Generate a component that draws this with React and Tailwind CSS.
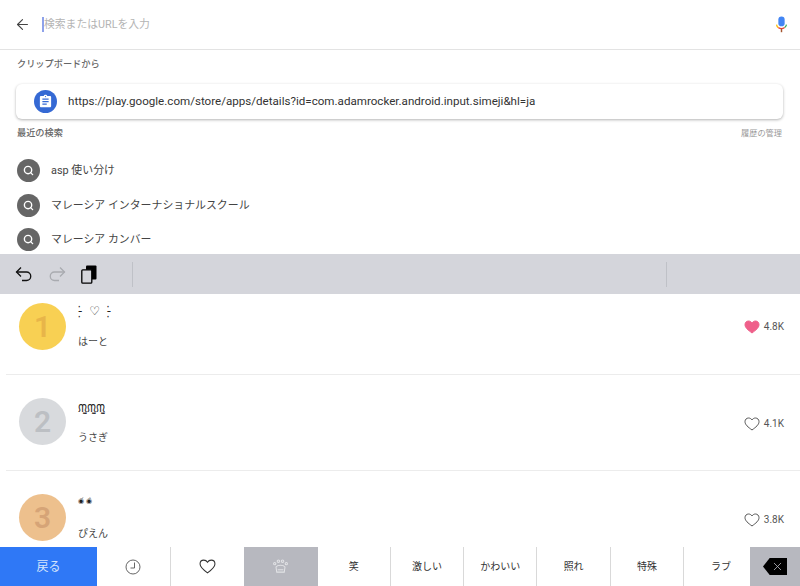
import React from "react";
import { ArrowLeft, Search, X } from "lucide-react";

const sans = "font-['Roboto','Noto_Sans_CJK_JP',sans-serif]";

const history = ["asp 使い分け", "マレーシア インターナショナルスクール", "マレーシア カンバー"];

const ranks = [
  { n: 1, face: "-̣̇ ♡ -̣̇", faceCls: "-mt-[1px] text-[12px] [word-spacing:3px]", nameCls: "mt-[15px]", likeCls: "mt-0", name: "はーと", likes: "4.8K", liked: true, h: "h-[81px]", top: "pt-[9px]", circle: "bg-[#f8d053]", digit: "text-[#e8b549]" },
  { n: 2, face: "ᙏ̤̫ᙏ̤̫ᙏ̤̫", faceCls: "mt-[2px] text-[11px]", nameCls: "mt-[13px]", likeCls: "mt-[2px]", name: "うさぎ", likes: "4.1K", h: "h-24", top: "pt-[23px]", circle: "bg-[#d8dadd]", digit: "text-[#bcbfc3]" },
  { n: 3, face: "◉́◉̀", faceCls: "-mt-[2px] text-[7px] tracking-[2px]", nameCls: "mt-[17px]", likeCls: "mt-[2px]", name: "ぴえん", likes: "3.8K", h: "h-[76px]", top: "pt-[23px]", circle: "bg-[#edc08d]", digit: "text-[#d6a477]" },
];

const tabs = ["笑", "激しい", "かわいい", "照れ", "特殊", "ラブ"];

function Clipboard() {
  return (
    <svg viewBox="0 0 24 24" className="w-[15px] h-[15px]" fill="#fff">
      <path d="M19 3h-4.18C14.4 1.84 13.3 1 12 1c-1.3 0-2.4.84-2.82 2H5c-1.1 0-2 .9-2 2v14c0 1.1.9 2 2 2h14c1.1 0 2-.9 2-2V5c0-1.1-.9-2-2-2zm-7 0c.55 0 1 .45 1 1s-.45 1-1 1-1-.45-1-1 .45-1 1-1zm2 14H7v-2h7v2zm3-4H7v-2h10v2zm0-4H7V7h10v2z" />
    </svg>
  );
}

function Mic() {
  return (
    <svg viewBox="0 0 14 20" className="w-[13px] h-[18px] mt-px" fill="none">
      <rect x="3.5" y="0.5" width="7" height="11" rx="3.5" fill="#4285f4" />
      <path d="M1.5 9.5c.2 1.6 1 2.8 2 3.4" stroke="#fbbc05" strokeWidth="1.4" />
      <path d="M3.5 12.9c2 1.2 5 1.2 7-.2" stroke="#ea4335" strokeWidth="1.4" />
      <path d="M10.5 12.7c1-.7 1.8-1.8 2-3.2" stroke="#34a853" strokeWidth="1.4" />
      <rect x="6.2" y="14" width="1.6" height="4" fill="#a5552f" />
    </svg>
  );
}

function Undo({ flip, color }) {
  return (
    <svg viewBox="0 0 18 18" className={`w-[18px] h-[18px] ${flip ? "-scale-x-100" : ""}`} fill="none" stroke={color} strokeWidth="1.3">
      <path d="M6 2.5 1.5 7 6 11.5" />
      <path d="M1.5 7h10a4.2 4.2 0 0 1 0 8.5H7" />
    </svg>
  );
}

function Copy() {
  return (
    <svg viewBox="0 0 16 19" className="w-4 h-[19px]">
      <rect x="5" y="0.5" width="10.5" height="14" rx="1" fill="#000" />
      <rect x="0.8" y="4.8" width="10" height="13.4" rx="1" fill="#d4d5db" stroke="#000" strokeWidth="1.3" />
    </svg>
  );
}

function Heart({ liked, size = "w-4 h-[14px]", stroke = "#555" }) {
  return (
    <svg viewBox="0 0 24 21" className={size} fill={liked ? "#ef5f8a" : "none"} stroke={liked ? "#ef5f8a" : stroke} strokeWidth="1.5">
      <path d="M12 19.5C6 15 1.5 11.6 1.5 6.9 1.5 3.8 3.9 1.5 6.8 1.5c2.1 0 4 1.1 5.2 3 1.2-1.9 3.1-3 5.2-3 2.9 0 5.3 2.3 5.3 5.4 0 4.7-4.5 8.1-10.5 12.6z" />
    </svg>
  );
}

function Clock() {
  return (
    <svg viewBox="0 0 16 16" className="w-4 h-4" fill="none" stroke="#555" strokeWidth="0.9">
      <circle cx="8" cy="8" r="7" />
      <path d="M9.5 3.5V9H5.5" />
    </svg>
  );
}

function Paw() {
  return (
    <svg viewBox="0 0 16 16" className="w-[15px] h-[15px]" fill="none" stroke="#e2e3e6" strokeWidth="1.1">
      <circle cx="1.8" cy="5" r="1.2" />
      <circle cx="5.8" cy="2.3" r="1.3" />
      <circle cx="10.2" cy="2.3" r="1.3" />
      <circle cx="14.2" cy="5" r="1.2" />
      <path d="M3.2 8.5c1.8-2.4 7.8-2.4 9.6 0l-.8 5.5H4z" />
      <path d="M5 11.5h6" />
    </svg>
  );
}

function Tab({ children, border = true, className = "" }) {
  return (
    <div className={`h-full flex items-center justify-center text-[10px] text-[#333] ${border ? "border-r border-[#d9d9d9]" : ""} ${className}`}>
      {children}
    </div>
  );
}

export default function App() {
  return (
    <div className={`w-[800px] h-[586px] bg-white overflow-hidden flex flex-col ${sans}`}>
      {/* search bar */}
      <div className="h-[50px] shrink-0 border-b border-[#e3e3e3] flex items-center pl-[14px] pr-[12px]">
        <ArrowLeft className="w-[17px] h-[17px] text-[#444]" strokeWidth={1.6} />
        <div className="ml-[11px] w-[2px] h-[15px] bg-[#8ea2ea]" />
        <span className="pt-px text-[10.8px] text-[#b4b4b4] flex-1">検索またはURLを入力</span>
        <Mic />
      </div>

      <div className="h-[204px] shrink-0 px-4 overflow-hidden">
        <p className="mt-[7px] ml-px text-[9.2px] leading-[14px] font-medium text-[#666]">クリップボードから</p>
        <div className="mt-[13px] h-[35px] w-[767px] rounded-md bg-white shadow-[0_1px_3px_rgba(0,0,0,0.3)] flex items-center pl-[18px]">
          <div className="w-[23px] h-[23px] rounded-full bg-[#3569d4] flex items-center justify-center">
            <Clipboard />
          </div>
          <span className="ml-[11px] text-[11.6px] text-[#333]">
            https://play.google.com/store/apps/details?id=com.adamrocker.android.input.simeji&amp;hl=ja
          </span>
        </div>
        <div className="mt-[7px] h-[14px] w-[766px] flex items-center justify-between">
          <span className="ml-px text-[9.2px] font-medium text-[#666]">最近の検索</span>
          <span className="text-[8.2px] text-[#999]">履歴の管理</span>
        </div>
        <div className="mt-[19px] flex flex-col gap-[11.5px]">
          {history.map((q) => (
            <div key={q} className="h-[23px] ml-px flex items-center">
              <div className="w-[23px] h-[23px] rounded-full bg-[#666] flex items-center justify-center">
                <Search className="w-[11px] h-[11px] text-white" strokeWidth={3} />
              </div>
              <span className="ml-[11px] pt-[2px] text-[10.9px] text-[#444]">{q}</span>
            </div>
          ))}
        </div>
      </div>

      {/* keyboard toolbar */}
      <div className="h-10 shrink-0 bg-[#d4d5db] flex items-center pl-[15px]">
        <Undo color="#111" />
        <div className="ml-[15px]"><Undo flip color="#a9abb0" /></div>
        <div className="ml-[15px]"><Copy /></div>
        <div className="ml-[35px] w-px h-[25px] bg-[#bfc1c7]" />
        <div className="ml-[533px] w-px h-[25px] bg-[#bfc1c7]" />
      </div>

      {/* ranking list */}
      <div className="flex-1 min-h-0 overflow-hidden">
        {ranks.map((r, i) => (
          <div key={r.n} className={`${r.h} ${i < 2 ? "border-b border-[#ececec] ml-[6px]" : "ml-[6px]"}`}>
            <div className={`${r.top} flex pl-[13px] pr-[16px]`}>
              <div className={`w-[47px] h-[47px] rounded-full flex items-center justify-center text-[30px] font-semibold ${r.circle} ${r.digit}`}>
                {r.n}
              </div>
              <div className="ml-[12px] flex-1">
                <p className={`h-[18px] font-['DejaVu_Sans',sans-serif] leading-[18px] text-[#222] ${r.faceCls}`}>{r.face}</p>
                <p className={`text-[10px] leading-[14px] text-[#444] ${r.nameCls}`}>{r.name}</p>
              </div>
              <div className={`flex items-center gap-[4px] h-[47px] ${r.likeCls}`}>
                <Heart liked={r.liked} />
                <span className="text-[10px] text-[#555]">{r.likes}</span>
              </div>
            </div>
          </div>
        ))}
      </div>

      {/* category tabs */}
      <div className="h-[39px] shrink-0 flex bg-white">
        <div className="w-[97px] h-full bg-[#2f78f6] flex items-center justify-center text-[12px] text-[#d5e4fc]">戻る</div>
        <Tab className="w-[74px]"><Clock /></Tab>
        <Tab border={false} className="w-[73px]"><Heart size="w-[17px] h-[15px]" stroke="#333" /></Tab>
        <Tab border={false} className="w-[74px] bg-[#b7b8bf]"><Paw /></Tab>
        {tabs.map((t, i) => (
          <Tab key={t} border={i < 5} className={i < 5 ? "w-[73.4px]" : "w-[66px] pl-[8px]"}>{t}</Tab>
        ))}
        <div className="w-[50px] h-full bg-[#b7b8bf] flex items-center justify-center">
          <div className="w-[24px] h-[17px] flex items-center justify-end pr-[3px] bg-black [clip-path:polygon(28%_0,100%_0,100%_100%,28%_100%,0_50%)]">
            <X className="w-[13px] h-[13px] text-[#b7b8bf]" strokeWidth={1.5} />
          </div>
        </div>
      </div>
    </div>
  );
}
